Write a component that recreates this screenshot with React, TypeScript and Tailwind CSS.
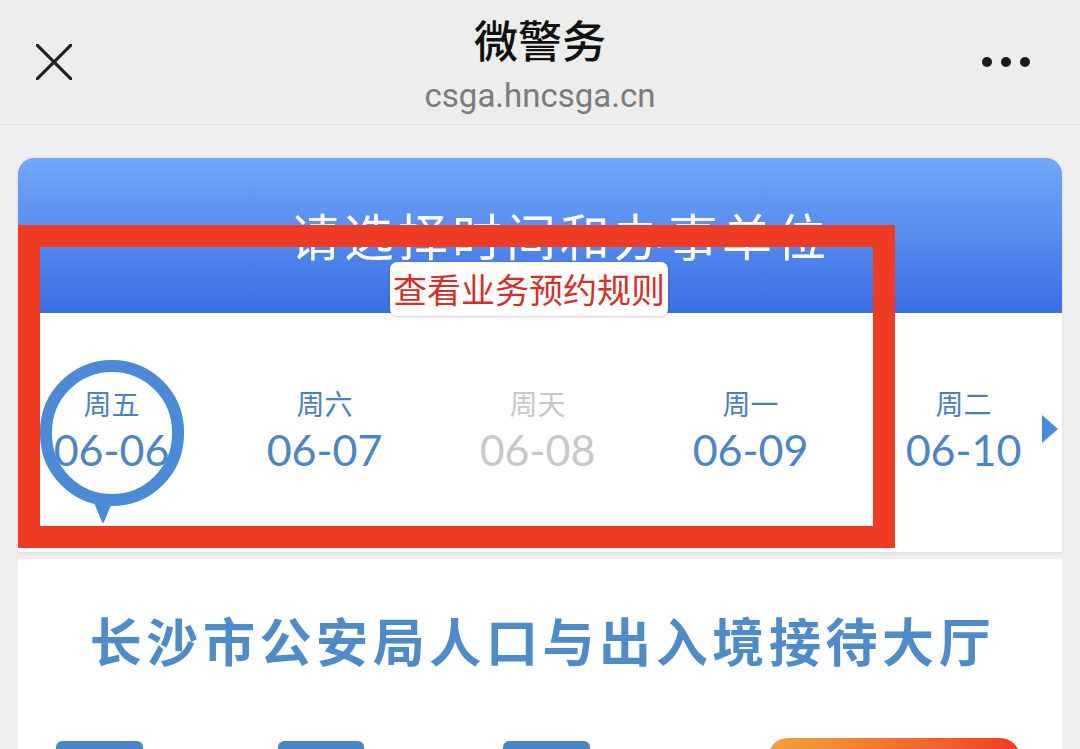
const days = [
  { week: "周五", date: "06-06", off: false, active: true },
  { week: "周六", date: "06-07", off: false, active: false },
  { week: "周天", date: "06-08", off: true, active: false },
  { week: "周一", date: "06-09", off: false, active: false },
  { week: "周二", date: "06-10", off: false, active: false },
]

const App = () => {
  return (
    <div className="w-[1080px] h-[749px] overflow-hidden bg-[#efeff2] font-['Noto_Sans_CJK_SC',sans-serif]">
      {/* top bar */}
      <div className="h-[125px] bg-[#ededed] border-b border-[#e2e2e2] grid grid-cols-[1fr_auto_1fr] items-start px-[36px]">
        <div className="pt-[44px]">
          <svg width="36" height="36" viewBox="0 0 36 36">
            <path d="M1 1 L35 35 M35 1 L1 35" stroke="#222" strokeWidth="3.2" strokeLinecap="round" />
          </svg>
        </div>
        <div className="flex flex-col items-center pt-[12px]">
          <h1 className="text-[44px] leading-[54px] font-medium text-[#111]">微警务</h1>
          <p className="text-[33px] leading-[36px] mt-[12px] text-[#7c7c7c] font-['Roboto',sans-serif]">csga.hncsga.cn</p>
        </div>
        <div className="flex justify-end gap-[9px] pt-[57px] pr-[14px]">
          <span className="w-[10px] h-[10px] rounded-full bg-[#1a1a1a]" />
          <span className="w-[10px] h-[10px] rounded-full bg-[#1a1a1a]" />
          <span className="w-[10px] h-[10px] rounded-full bg-[#1a1a1a]" />
        </div>
      </div>

      <div className="relative px-[18px] pt-[33px]">
        <div className="shadow-[0_1px_4px_rgba(0,0,0,0.08)]">
          {/* blue header */}
          <div className="h-[155px] rounded-t-[16px] bg-gradient-to-b from-[#72a8fa] to-[#3b6de3] flex flex-col items-center pt-[48px]">
            <h2 className="pl-[40px] text-[50px] leading-[56px] tracking-[4px] text-white">请选择时间和办事单位</h2>
            <button className="relative z-10 mr-[22px] h-[54px] px-[3px] bg-white rounded-[7px] shadow-[0_1px_3px_rgba(0,0,0,0.2)] text-[34px] leading-[54px] text-[#d3302b]">
              查看业务预约规则
            </button>
          </div>

          {/* dates */}
          <div className="relative h-[239px] bg-white overflow-hidden flex items-center">
            <div className="flex -ml-[13px]">
              {days.map((d) => (
                <div key={d.date} className="relative w-[213px] shrink-0 flex flex-col items-center">
                  <span className={`text-[28px] leading-[34px] ${d.off ? "text-[#c8c8c8]" : "text-[#4b82bd]"}`}>{d.week}</span>
                  <span className={`font-['Lato',sans-serif] text-[43px] leading-[60px] ${d.off ? "text-[#c9c9c9]" : "text-[#4c85c3]"}`}>{d.date}</span>
                  {d.active && (
                    <div className="absolute left-1/2 -translate-x-1/2 top-[-26px] w-[144px] h-[168px]">
                      <div className="w-[144px] h-[146px] rounded-full border-[12px] border-[#4a8ad6]" />
                      <svg width="22" height="26" viewBox="0 0 22 26" className="absolute left-[52px] top-[138px]">
                        <path d="M0 0 L22 0 L12 24 Q11 26 10 24 Z" fill="#4a8ad6" />
                      </svg>
                    </div>
                  )}
                </div>
              ))}
            </div>
            <svg width="16" height="28" viewBox="0 0 16 28" className="absolute right-[4px] top-[102px]">
              <path d="M0 0 L16 14 L0 28 Z" fill="#4a8ad6" />
            </svg>
          </div>
        </div>

        {/* hall card */}
        <div className="mt-[7px] bg-white h-[200px] flex flex-col items-center pt-[51px]">
          <h3 className="pl-[5px] text-[52px] leading-[60px] tracking-[4.6px] font-bold text-[#4f8bc9]">长沙市公安局人口与出入境接待大厅</h3>
          <div className="w-full flex items-start mt-[68px]">
            <span className="ml-[38px] mt-[3px] w-[87px] h-[20px] rounded-t-[6px] bg-[#4a86c5]" />
            <span className="ml-[135px] mt-[3px] w-[86px] h-[20px] rounded-t-[6px] bg-[#4a86c5]" />
            <span className="ml-[139px] mt-[3px] w-[87px] h-[20px] rounded-t-[6px] bg-[#4a86c5]" />
            <span className="ml-[178px] w-[252px] h-[40px] rounded-full bg-gradient-to-r from-[#f2a03c] to-[#f03a22]" />
          </div>
        </div>

        {/* red annotation box */}
        <div className="absolute left-[18px] top-[100px] w-[877px] h-[323px] border-[22px] border-[#ef3b23] pointer-events-none" />
      </div>
    </div>
  )
}

export default App
